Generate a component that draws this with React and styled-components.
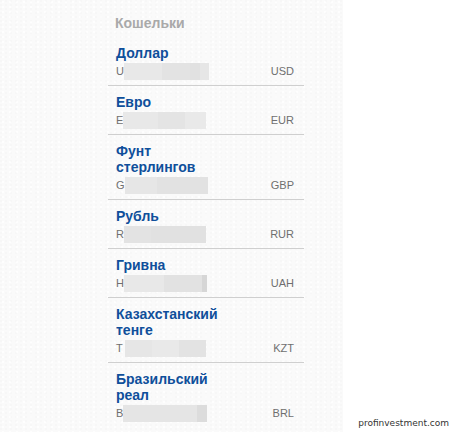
import React from "react";
import styled, { createGlobalStyle } from "styled-components";

const Global = createGlobalStyle`
  html, body { margin: 0; padding: 0; background: #ffffff; }
  body { font-family: "Liberation Sans", Arial, sans-serif; }
`;

const Page = styled.div`
  position: relative;
  display: flex;
  width: 471px;
  height: 432px;
  overflow: hidden;
  background: #ffffff;
`;

const Panel = styled.div`
  width: 343px;
  height: 432px;
  box-sizing: border-box;
  padding: 15px 0 0 108px;
  background-color: #fafafa;
  background-image:
    radial-gradient(circle at 1px 1px, rgba(0,0,0,0.012) 1px, transparent 1.2px),
    radial-gradient(circle at 3px 2px, rgba(255,255,255,0.7) 1px, transparent 1.2px);
  background-size: 5px 4px, 7px 5px;
`;

const Wallets = styled.section`
  width: 196px;
`;

const Title = styled.h2`
  margin: 0 0 5px 7px;
  font-size: 14px;
  line-height: 17px;
  font-weight: 700;
  color: #a9a9a9;
`;

const Row = styled.div`
  box-sizing: border-box;
  padding: 8px 10px 5px 8px;
  border-bottom: 1px solid ${(p) => (p.$last ? "transparent" : "#cfcfcf")};
`;

const Name = styled.div`
  max-width: 106px;
  font-size: 14px;
  line-height: 16px;
  font-weight: 700;
  color: #0f4f9b;
  margin-bottom: 2px;
`;

const Meta = styled.div`
  display: flex;
  align-items: center;
  height: 17px;
  font-size: 11px;
  color: #6f6f6f;
`;

const Letter = styled.span`
  line-height: 17px;
`;

const Mask = styled.span`
  display: flex;
  height: 17px;
  margin-left: ${(p) => p.$offset}px;
`;

const Chunk = styled.span`
  display: block;
  height: 17px;
  width: ${(p) => p.$w}px;
  background: ${(p) => p.$c};
`;

const Code = styled.span`
  margin-left: auto;
  line-height: 17px;
  color: #6f6f6f;
`;

const Watermark = styled.div`
  position: absolute;
  right: 22px;
  bottom: 3px;
  font-family: "DejaVu Sans", Verdana, sans-serif;
  font-size: 9px;
  line-height: 11px;
  color: #333;
`;

const wallets = [
  { name: "Доллар", letter: "U", code: "USD", off: 0, chunks: [[38, "#e8e8e8"], [28, "#e3e3e3"], [10, "#e1e1e1"], [9, "#e6e6e6"]] },
  { name: "Евро", letter: "E", code: "EUR", off: 0, chunks: [[35, "#e8e8e8"], [27, "#e4e4e4"], [21, "#e9e9e9"]] },
  { name: "Фунт стерлингов", letter: "G", code: "GBP", off: 0, chunks: [[32, "#e6e6e6"], [51, "#e2e2e2"]] },
  { name: "Рубль", letter: "R", code: "RUR", off: 0, chunks: [[27, "#e3e3e3"], [55, "#e1e1e1"]] },
  { name: "Гривна", letter: "H", code: "UAH", off: 0, chunks: [[40, "#e8e8e8"], [38, "#e2e2e2"], [5, "#d6d6d6"]] },
  { name: "Казахстанский тенге", letter: "T", code: "KZT", off: 2, chunks: [[27, "#e6e6e6"], [27, "#e9e9e9"], [27, "#e3e3e3"]] },
  { name: "Бразильский реал", letter: "B", code: "BRL", off: 0, chunks: [[74, "#e5e5e5"], [10, "#dcdcdc"]] },
];

export default function App() {
  return (
    <>
      <Global />
      <Page>
        <Panel>
          <Wallets>
            <Title>Кошельки</Title>
            {wallets.map((w, i) => (
              <Row key={w.code} $last={i === wallets.length - 1}>
                <Name>{w.name}</Name>
                <Meta>
                  <Letter>{w.letter}</Letter>
                  <Mask $offset={w.off}>
                    {w.chunks.map(([cw, c], j) => (
                      <Chunk key={j} $w={cw} $c={c} />
                    ))}
                  </Mask>
                  <Code>{w.code}</Code>
                </Meta>
              </Row>
            ))}
          </Wallets>
        </Panel>
        <Watermark>profinvestment.com</Watermark>
      </Page>
    </>
  );
}
